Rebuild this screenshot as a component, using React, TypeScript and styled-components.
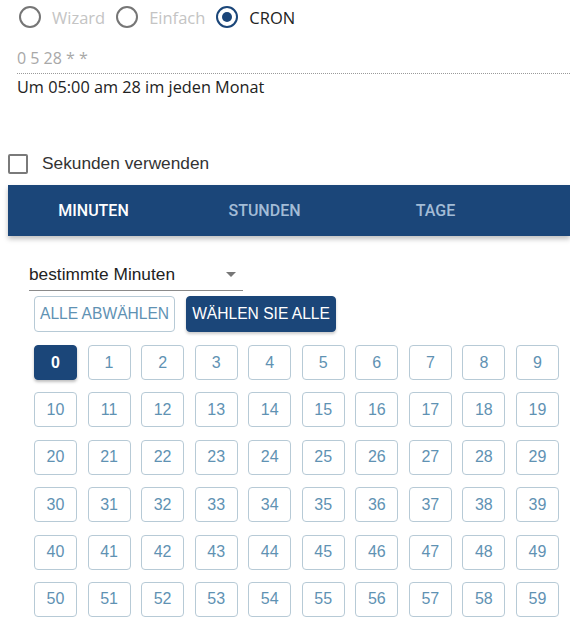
import React, { useState } from 'react'
import styled, { createGlobalStyle } from 'styled-components'

const GlobalStyle = createGlobalStyle`
  html, body {
    margin: 0;
    padding: 0;
    background: #fff;
  }
  body {
    font-family: 'Liberation Sans', Arial, sans-serif;
    overflow: hidden;
  }
`

const PRIMARY = '#1b4679'

const Page = styled.div`
  width: 570px;
  height: 628px;
  overflow: hidden;
`

const ModeRow = styled.div`
  display: flex;
  align-items: center;
  height: 34px;
  padding-left: 19px;
  font-family: 'Open Sans', 'Noto Sans', sans-serif;
  font-size: 16.5px;
`

const RadioLabel = styled.label<{ $disabled?: boolean }>`
  display: flex;
  align-items: center;
  gap: 11px;
  margin-right: 11px;
  color: ${(p) => (p.$disabled ? '#c4c4c4' : '#222')};
`

const RadioCircle = styled.span<{ $checked?: boolean }>`
  width: 18px;
  height: 18px;
  border-radius: 50%;
  border: 2px solid ${(p) => (p.$checked ? PRIMARY : '#767676')};
  display: flex;
  align-items: center;
  justify-content: center;

  &::after {
    content: '';
    width: 10px;
    height: 10px;
    border-radius: 50%;
    background: ${PRIMARY};
    display: ${(p) => (p.$checked ? 'block' : 'none')};
  }
`

const CronBlock = styled.div`
  padding-left: 17px;
  font-family: 'Open Sans', 'Noto Sans', sans-serif;
`

const CronInput = styled.div`
  margin-top: 12px;
  height: 27px;
  line-height: 24px;
  font-size: 16px;
  color: #a8a8a8;
  border-bottom: 1px dotted #9a9a9a;
`

const CronText = styled.div`
  margin-top: 2px;
  font-size: 16.3px;
  color: #222;
  line-height: 22px;
`

const SecondsRow = styled.label`
  display: flex;
  align-items: center;
  gap: 14px;
  margin-top: 55px;
  padding-left: 8px;
  font-size: 17.3px;
  color: #333;
`

const CheckBox = styled.span`
  width: 16px;
  height: 16px;
  border: 2px solid #7a7a7a;
  border-radius: 2px;
`

const TabBar = styled.div`
  display: flex;
  margin-top: 11px;
  margin-left: 8px;
  height: 51px;
  background: ${PRIMARY};
  box-shadow: 0 3px 5px rgba(0, 0, 0, 0.25);
`

const Tab = styled.div<{ $active?: boolean }>`
  width: 171px;
  display: flex;
  align-items: center;
  justify-content: center;
  font-family: Roboto, 'Liberation Sans', sans-serif;
  font-size: 16px;
  font-weight: 500;
  color: ${(p) => (p.$active ? '#fff' : '#a3bcd6')};
`

const Panel = styled.div`
  padding: 19px 0 0 29px;
`

const SelectBox = styled.div`
  width: 214px;
  height: 36px;
  display: flex;
  align-items: center;
  justify-content: space-between;
  box-sizing: border-box;
  padding-top: 4px;
  border-bottom: 1px solid #8a8a8a;
  font-size: 17.3px;
  color: #222;
`

const Caret = styled.span`
  width: 0;
  height: 0;
  margin-right: 7px;
  border-left: 5px solid transparent;
  border-right: 5px solid transparent;
  border-top: 5px solid #777;
`

const ButtonRow = styled.div`
  display: flex;
  gap: 11px;
  margin: 5px 0 0 5px;
`

const ActionButton = styled.button<{ $filled?: boolean }>`
  height: 36px;
  padding: 0 5px;
  border-radius: 4px;
  font-family: 'Liberation Sans', Arial, sans-serif;
  font-size: 15.6px;
  border: 1px solid ${(p) => (p.$filled ? PRIMARY : '#b7cad6')};
  background: ${(p) => (p.$filled ? PRIMARY : '#fff')};
  color: ${(p) => (p.$filled ? '#fff' : '#5f92b3')};
  box-shadow: ${(p) => (p.$filled ? '0 2px 3px rgba(0,0,0,0.2)' : 'none')};
`

const Grid = styled.div`
  display: grid;
  grid-template-columns: repeat(10, 43px);
  column-gap: 10.55px;
  row-gap: 12.4px;
  margin: 13px 0 0 5px;
`

const Cell = styled.div<{ $selected?: boolean }>`
  height: 35px;
  box-sizing: border-box;
  border-radius: 4px;
  display: flex;
  align-items: center;
  justify-content: center;
  font-size: 16px;
  border: 1px solid ${(p) => (p.$selected ? PRIMARY : '#b7cad6')};
  background: ${(p) => (p.$selected ? PRIMARY : '#fff')};
  color: ${(p) => (p.$selected ? '#fff' : '#5f92b3')};
  font-weight: ${(p) => (p.$selected ? 700 : 400)};
  box-shadow: ${(p) => (p.$selected ? '0 2px 3px rgba(0,0,0,0.25)' : 'none')};
`

const modes = [
  { label: 'Wizard', disabled: true },
  { label: 'Einfach', disabled: true },
  { label: 'CRON', disabled: false },
]

const tabs = ['MINUTEN', 'STUNDEN', 'TAGE']

export default function App() {
  const [selected] = useState<number[]>([0])

  return (
    <Page>
      <GlobalStyle />
      <ModeRow>
        {modes.map((m) => (
          <RadioLabel key={m.label} $disabled={m.disabled}>
            <RadioCircle $checked={!m.disabled} />
            {m.label}
          </RadioLabel>
        ))}
      </ModeRow>
      <CronBlock>
        <CronInput>0 5 28 * *</CronInput>
        <CronText>Um 05:00 am 28 im jeden Monat</CronText>
      </CronBlock>
      <SecondsRow>
        <CheckBox />
        Sekunden verwenden
      </SecondsRow>
      <TabBar>
        {tabs.map((t, i) => (
          <Tab key={t} $active={i === 0}>
            {t}
          </Tab>
        ))}
      </TabBar>
      <Panel>
        <SelectBox>
          bestimmte Minuten
          <Caret />
        </SelectBox>
        <ButtonRow>
          <ActionButton>ALLE ABWÄHLEN</ActionButton>
          <ActionButton $filled>WÄHLEN SIE ALLE</ActionButton>
        </ButtonRow>
        <Grid>
          {Array.from({ length: 60 }, (_, i) => (
            <Cell key={i} $selected={selected.includes(i)}>
              {i}
            </Cell>
          ))}
        </Grid>
      </Panel>
    </Page>
  )
}
